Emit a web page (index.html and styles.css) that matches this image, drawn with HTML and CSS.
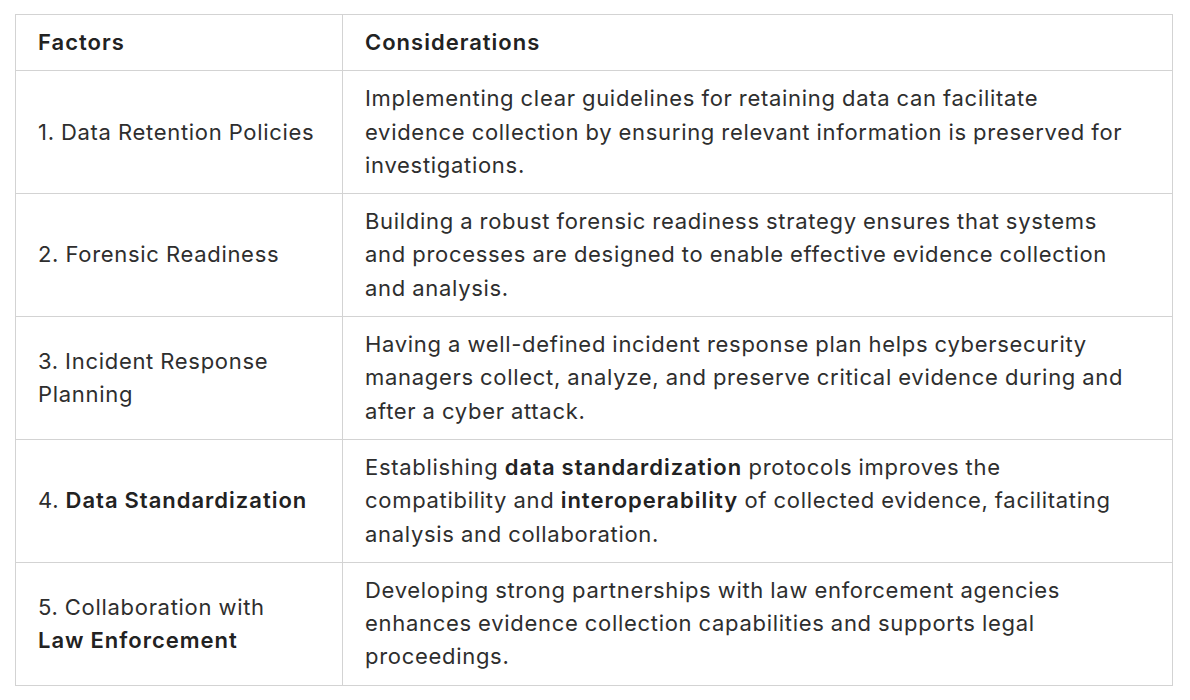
FILE: index.html
```html
<!DOCTYPE html>
<html>
<head>
<meta charset="utf-8">
<link rel="stylesheet" href="styles.css">
</head>
<body>
<div class="wrap">
<table class="tbl">
<colgroup><col class="c1"><col class="c2"></colgroup>
<thead>
<tr><th>Factors</th><th>Considerations</th></tr>
</thead>
<tbody>
<tr><td>1. Data Retention Policies</td><td>Implementing clear guidelines for retaining data can facilitate evidence collection by ensuring relevant information is preserved for investigations.</td></tr>
<tr><td>2. Forensic Readiness</td><td>Building a robust forensic readiness strategy ensures that systems and processes are designed to enable effective evidence collection and analysis.</td></tr>
<tr><td>3. Incident Response Planning</td><td>Having a well-defined incident response plan helps cybersecurity managers collect, analyze, and preserve critical evidence during and after a cyber attack.</td></tr>
<tr><td>4. <strong>Data Standardization</strong></td><td>Establishing <strong>data standardization</strong> protocols improves the compatibility and <strong>interoperability</strong> of collected evidence, facilitating analysis and collaboration.</td></tr>
<tr><td>5. Collaboration with <strong>Law Enforcement</strong></td><td>Developing strong partnerships with law enforcement agencies enhances evidence collection capabilities and supports legal proceedings.</td></tr>
</tbody>
</table>
</div>
</body>
</html>
```
FILE: styles.css
```css
html, body { margin: 0; padding: 0; background: #fff; }
.wrap { padding: 14px 17px 0 15px; }
.tbl {
  width: 100%;
  border-collapse: collapse;
  font-family: Inter, "Noto Sans", sans-serif;
  font-size: 22px;
  letter-spacing: 0.7px;
  word-spacing: -0.6px;
  line-height: 33.3px;
  color: #2e2e2e;
}
.c1 { width: 327px; }
.tbl th, .tbl td {
  border: 1px solid #d3d3d3;
  padding: 11px 36px 11px 22px;
  text-align: left;
  vertical-align: middle;
}
.tbl th:first-child, .tbl td:first-child { padding-right: 27px; }
.tbl th { font-weight: 600; color: #222; letter-spacing: 1px; }
.tbl td strong { font-weight: 600; color: #222; letter-spacing: 1px; }
```
